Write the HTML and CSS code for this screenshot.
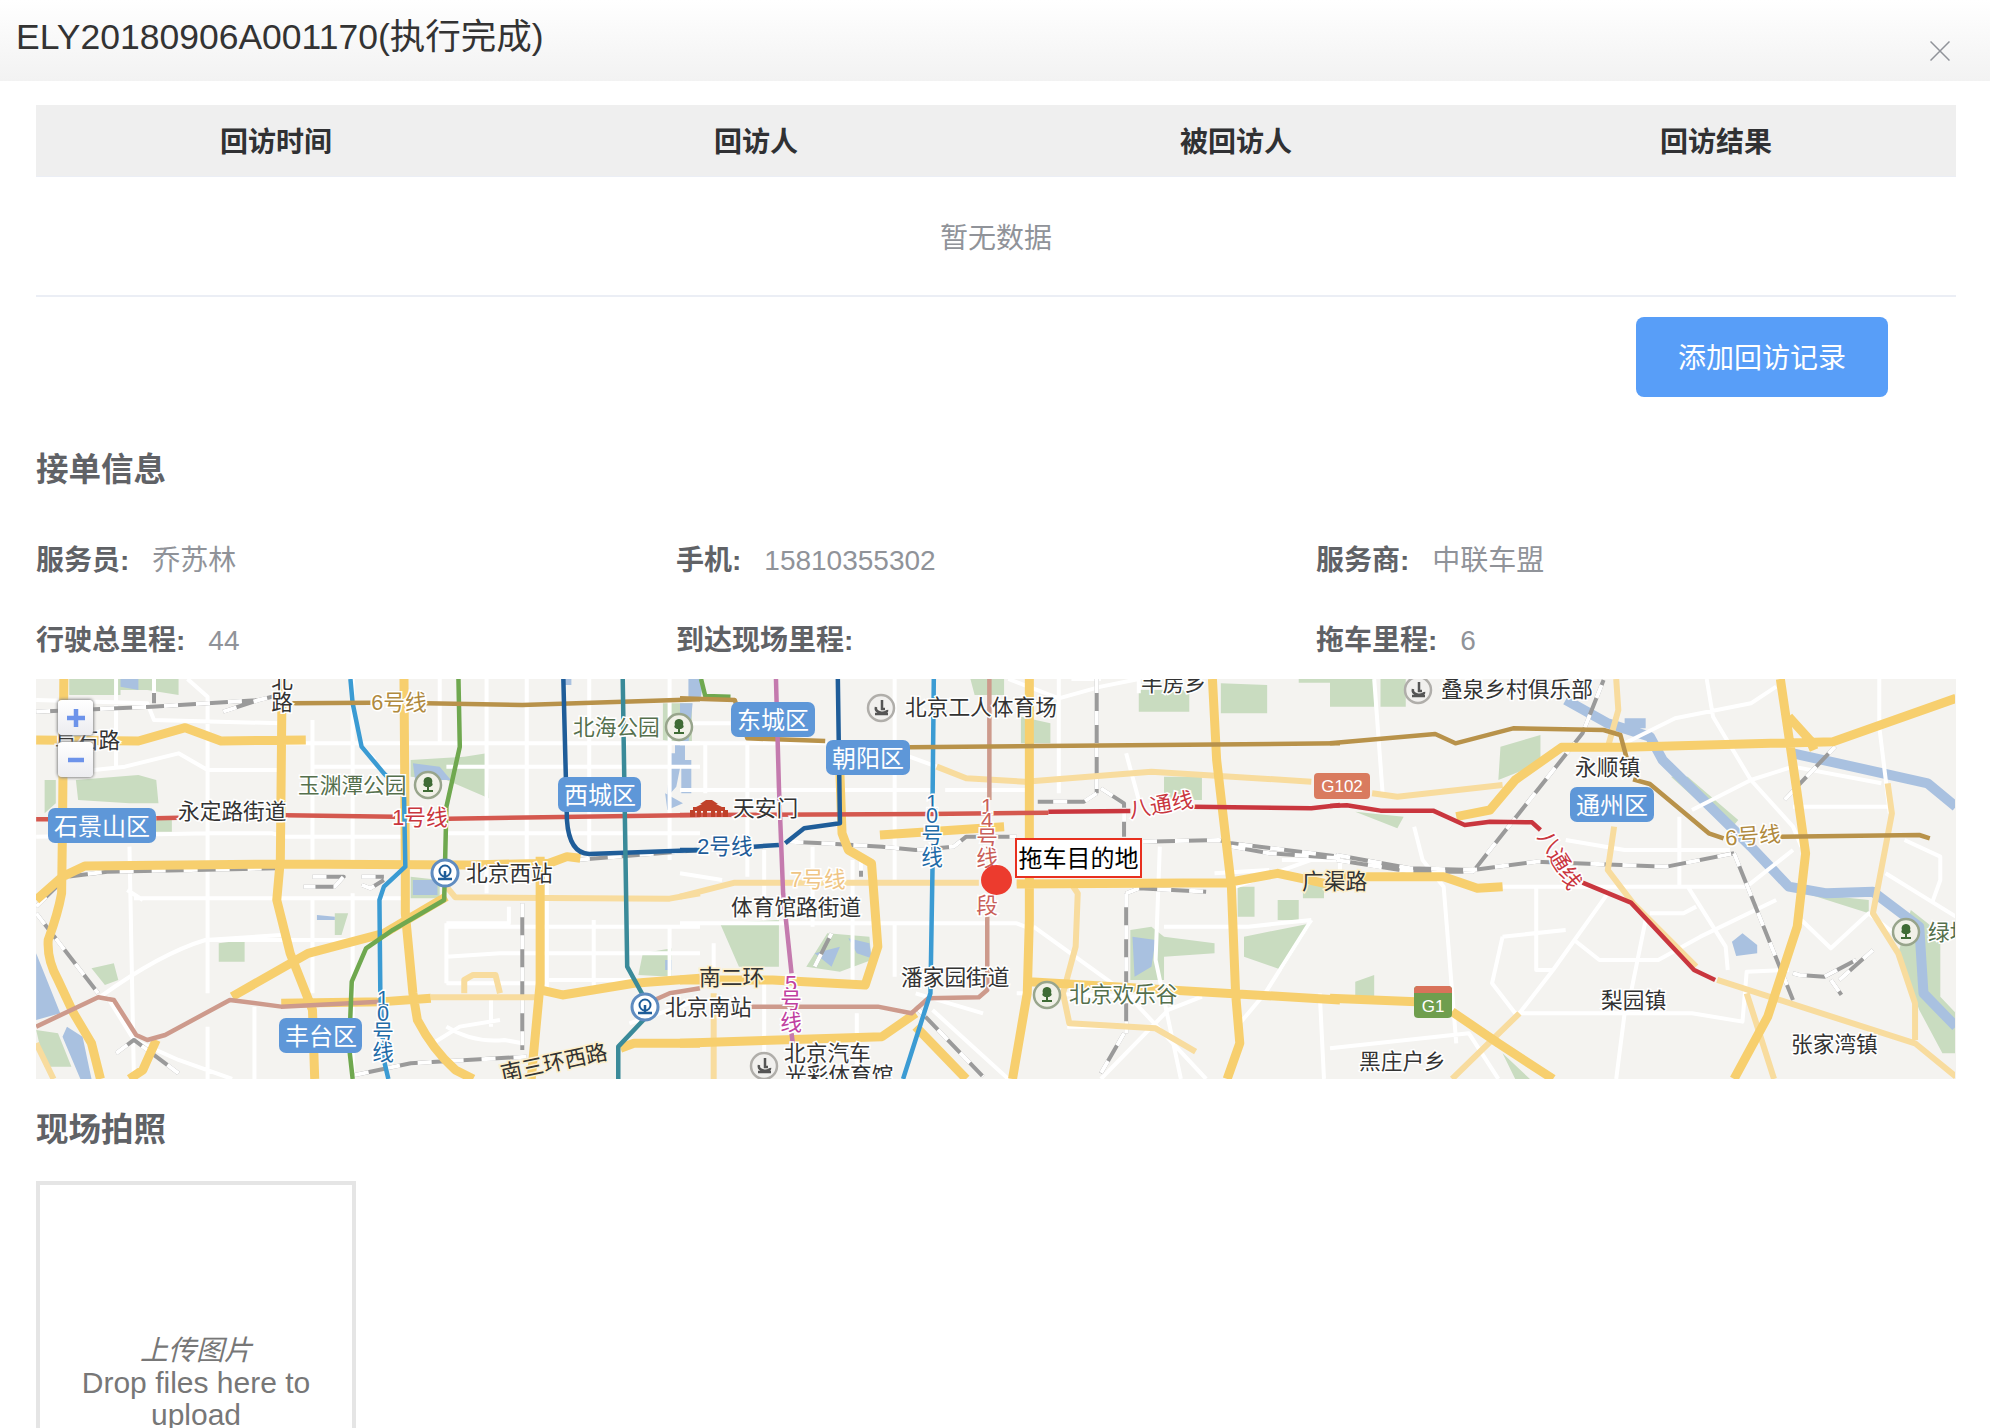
FILE: index.html
```html
<!DOCTYPE html>
<html>
	<head>
		<meta charset="UTF-8">
		<title>ELY20180906A001170</title>
		<link rel="stylesheet" href="styles.css">
	</head>
	<body>
		<div class="head">
			<h2>ELY20180906A001170(执行完成)</h2>
			<svg class="close" width="20" height="20" viewBox="0 0 20 20"><path d="M0.5 0.5L19.5 19.5M19.5 0.5L0.5 19.5"/></svg>
		</div>
		<div class="content">
			<table class="visit">
				<thead>
					<tr><th>回访时间</th><th>回访人</th><th>被回访人</th><th>回访结果</th></tr>
				</thead>
				<tbody>
					<tr><td colspan="4">暂无数据</td></tr>
				</tbody>
			</table>
			<div class="btn-row"><a class="btn" href="#">添加回访记录</a></div>

			<h3>接单信息</h3>
			<div class="info">
				<div><b>服务员:</b><span>乔苏林</span></div>
				<div><b>手机:</b><span>15810355302</span></div>
				<div><b>服务商:</b><span>中联车盟</span></div>
				<div><b>行驶总里程:</b><span>44</span></div>
				<div><b>到达现场里程:</b></div>
				<div><b>拖车里程:</b><span>6</span></div>
			</div>

			<div class="map">
				<svg class="tiles" width="1919" height="400" viewBox="36 679 1919 400">
					<defs>
						<g id="i-park">
							<circle r="13" fill="#f1f1e8" stroke="#98a58c" stroke-width="2.500"/>
							<path fill="#3f6b35" d="M0-8C4-8 5-4 4-2C6 0 3 2 1 2V5H5V7H-5V5H-1V2C-3 2-6 0-4-2C-5-4-4-8 0-8Z"/>
						</g>
						<g id="i-rail">
							<circle r="13" fill="#fff" stroke="#5f8cc0" stroke-width="3"/>
							<circle cy="-2" r="5.500" fill="none" stroke="#1f5d99" stroke-width="2"/>
							<path fill="none" stroke="#1f5d99" stroke-width="2.500" d="M0-2V5M-7 6H7"/>
						</g>
						<g id="i-sport">
							<circle r="13" fill="#f1f0ee" stroke="#b0aeaa" stroke-width="2.500"/>
							<path fill="none" stroke="#555" stroke-width="2.500" d="M1-8V1H4M-5-1C-7 6 7 6 6 2M-6 6H7"/>
						</g>
						<g id="rails">
							<g class="c3"><path d="M81 155L340 140L580 120M500 155L580 120L640 100M345 57V130M81 760L220 1000M81 740L150 650L240 635L620 625M700 650H770L750 680H680M810 650H860M810 675L830 685L860 660M1170 730V1170M795 1245L920 1210L1180 1190M260 1180L300 1140L400 1240M1290 600L1568 570"/></g>
							<g class="c4"><path d="M260 545L340 550L480 560L560 570L650 560L680 530H800M990 57V400M990 400L960 425H850M1000 385L1055 430V530M1100 545L1280 540L1310 550L1568 590M1310 560L1400 580L1568 595M1060 700L1090 685L1250 695M1060 700V1120M1055 1120L1000 1240M430 590V650M320 920L360 820M560 1040L720 1250"/></g>
							<g class="c5"><path d="M15 585L190 625L340 630L490 605L800 620L960 580M15 600L190 635L340 635L380 570L600 220L650 60M960 580L1100 1020M1080 420L1200 260M1100 940L1115 945L1175 950L1250 900M1210 960L1290 870M1190 960L1215 1005"/></g>
						</g>
					</defs>

					<g class="parks">
						<g class="c3"><path d="M155 57H400V105L330 90H270V105H155ZM170 360L310 345L350 360L355 430H290L175 420ZM100 360H125V430L100 460ZM490 850L548 840V905H490ZM920 300L1040 290L1090 280L1095 415L1000 360L920 350ZM1440 880L1505 865V950L1430 945ZM1485 130H1550V250L1485 240ZM920 650L985 660V715H920ZM205 925L255 910L265 960L235 975ZM750 760H780L765 825H750ZM81 1110L130 1120L160 1220H100ZM330 480H385V515H350Z"/></g>
						<g class="c4"><path d="M1090 90H1210V155H1090ZM1285 70L1395 75V160H1285ZM810 170L880 190V250H810ZM690 57H770V105H700ZM95 790L235 780V920H140ZM1070 810L1120 800L1150 830L1270 850V880L1150 890V960H1070ZM1340 830L1500 790L1430 930L1340 890ZM1150 350H1240V420H1150ZM1420 720H1470V780H1420ZM1325 680H1365V770H1325ZM1480 680L1530 660V715H1480ZM300 920L350 820L450 830L455 900L380 935ZM1470 57H1568V68H1470Z"/></g>
						<g class="c5"><path d="M0 57H105V140H0ZM120 57H180V140H120ZM405 260L500 225V310L400 360ZM810 350L850 350L970 480L950 510ZM1380 750L1450 820V1010L1487 1060V1180H1455L1400 1050L1350 880ZM60 965L105 945V1010H60ZM1130 700L1280 720V760ZM410 1180L475 1257H440ZM60 455L175 470L160 505Z"/></g>
					</g>

					<g class="water">
						<g class="c3"><path d="M81 880L135 1060L81 1080ZM150 1100L185 1130L205 1257H180L140 1130ZM925 310L985 320L1010 360L930 360ZM925 660H980V705H925ZM710 765L750 770V780H710ZM1500 280H1530L1515 380L1495 410ZM1490 400L1530 430L1495 450ZM1260 57H1280V75H1260ZM1490 900H1505V930H1490ZM270 57H310V90L270 80Z"/></g>
						<g class="c4"><path d="M0 130H30L20 250H0ZM20 57H55L50 110L20 115ZM1075 830L1130 840L1120 920L1080 950ZM320 880L380 860L360 920ZM400 835L450 850L455 895L420 880Z"/></g>
						<g class="c5"><path d="M955 845L980 820L1015 855L1015 880L965 888Z"/></g>
					</g>
					<g class="river">
						<g class="c4"><path d="M0 250V320M15 300V400"/></g>
						<g class="c5"><path d="M560 120L660 190L760 230L790 300L1000 560L1090 680L1180 700L1290 695L1400 800L1410 1000L1487 1100M1100 280L1420 370L1487 440M700 190H750"/></g>
					</g>

					<g class="minor">
						<g class="c3"><path d="M420 57L465 110V1000M260 57V320M81 120L330 130L345 180L630 190M210 330L280 320L400 280L465 330H632M632 250H1568M700 180V600M790 57V600M790 700V1257M1090 57V700M985 57V250M1180 57V600M1320 57V600M1500 57V600M700 320H905M1000 320H1568M81 530L465 520H610L640 530H905M1000 520H1568M300 715H900M1000 800H1568M225 1010Q360 880 460 840L630 825M465 840H800M1000 890L1120 880H1568M1000 790H1140V740M1225 610V1000M1330 780V1000M1500 800V950M700 720V1000M285 690L320 720M290 560L300 1257M1000 1100Q1060 1150 1130 1140L1170 1150M970 1150L1030 1100L1120 1080M465 1100V1257M570 1040V1257M810 260L840 300M240 1010L300 1140L400 1200L520 1257M1000 970H1200M1410 1090L1568 1020M1230 960H1568M1100 1020V1100M1000 790V970"/></g>
						<g class="c4"><path d="M0 190H120M60 250V400M160 250V650M315 560V800M510 57V660M900 57V400M930 57L1000 57M630 390H820M0 390H600M0 250H350M545 290L610 320M1140 560L1130 900L1190 1257M840 800L1060 1000L1250 1257M0 790H800L840 810M1150 800H1350L1500 780M1500 780L1390 1000L1330 1090M920 1100H1130M1320 680L1500 600H1568M1060 280L1090 420M510 790V950M410 600V960M200 570V780M80 850V950M200 960V1257M600 1050L780 1257M1430 600H1568V640M1090 57V100M780 57L900 115L1000 80L1090 57M420 1060V1257M0 640L100 660M560 1000L720 1060M800 1000H820M1520 1000L1530 1257M1270 640L1400 630M1240 1010L1160 1050L1000 1257M840 1000L1100 1010"/></g>
						<g class="c5"><path d="M105 57L125 400M895 57L910 170L1000 360L1100 500L1120 560M1305 57V200L1330 460M1060 80L1000 130L820 175L700 250M200 500L220 600L270 680L300 1150M410 680H840L990 680L1100 570M490 680V930H530M850 680L940 860L945 930M580 840L640 900H780L880 830L1060 720M410 830L560 810M410 830L385 970L440 1060H860L980 1085L990 935L1090 930M660 700L530 930L450 1060M760 760H840L870 740M700 1060L680 1257M750 780L705 1060M860 450L1000 360L1100 320L1310 370M830 470V680M1100 440H1330M560 540L700 570H950M0 1165L330 1120L400 1257M1320 640L1487 770M1120 780L1190 865L1280 760L1350 830M1365 540L1450 590V660L1430 730"/></g>
					</g>

					<use href="#rails" class="rail"/>
					<use href="#rails" class="rail-dash"/>

					<g class="road-l">
						<g class="c3"><path d="M1000 680L1020 712L1500 716L1568 700M965 1012H1200M1040 1000V960L1060 945H1110L1120 1000M81 1150L120 1257"/></g>
						<g class="c4"><path d="M0 710L130 668H710M800 668L930 672L945 700L940 860L910 1000L925 1090L1130 1105L1225 1175M610 320L680 355L820 365L1120 335L1500 365M80 1000V1257"/></g>
						<g class="c5"><path d="M100 400L160 410L410 375M680 57L685 150L660 262M675 500L660 630L720 730L870 920M1325 370L1335 460L1290 760L1350 880L1390 1030L1390 1140M990 1000L1055 1257M450 1060L290 1257M920 960L1390 1150L1487 1250"/></g>
					</g>
					<g class="road">
						<g class="c3"><path d="M143 57L140 500L138 700Q130 760 108 840Q105 900 130 960L165 1060L205 1150L225 1257M81 240L310 243L415 203L495 243L685 240M632 57L628 600L620 720L650 880L700 1050L705 1257M905 57L908 600L908 760L925 1000L935 1080Q970 1170 1020 1230L1060 1257M81 720L140 650L190 618L620 612L1050 615L1230 610L1270 590L1300 595M1210 590V970L1190 1257M520 1010L690 880L860 820L1000 710M630 1030L860 1025L965 1015M1210 990L1260 1005L1420 970L1568 955M1390 1165L1420 1150H1568M350 1140L320 1230L290 1257"/></g>
						<g class="c4"><path d="M830 57V780L825 1000L790 1257M1265 57L1275 300L1310 680L1320 1000L1330 1150L1300 1257M380 340L385 520L400 570L455 610L470 860L440 975L220 960L0 960M475 525L770 500M800 672L1300 668L1420 640L1568 680M830 965L1568 1020M0 1150L480 1130L560 1060M560 1100L680 1257"/></g>
						<g class="c5"><path d="M1070 57L1110 400L1130 580L1110 800L1040 1070L960 1257M300 470L380 450L440 360L550 262L700 262L1195 245L1487 115M0 650L270 650L350 685L410 680M0 1015L205 1025M290 1055L400 1150L530 1257M1090 170L1140 240L1150 270"/></g>
					</g>

					<g class="lines">
						<g class="c3">
							<path class="l-pink" d="M81 1100L220 1012L255 1020L305 1125L330 1140L370 1125L515 1020L630 1040L850 1025M1450 1030L1500 1000L1568 985"/>
							<path class="l-blue" d="M785 57L790 130L810 260L860 340L905 400L908 620L860 680L850 720L852 1000L860 1200L870 1257"/>
							<path class="l-green" d="M1027 57L1030 260L1000 440L995 720L880 810L820 865L788 965L782 1160L790 1257"/>
							<path class="l-tan" d="M655 130L830 128M955 130L1170 135L1568 118"/>
							<path class="l-red1" d="M81 478H110M350 475L400 473M640 466L885 470M1005 476L1568 465"/>
							<path class="l-navy" d="M1262 57L1270 480Q1275 580 1320 582L1568 570"/>
							<path class="l-teal" d="M1395 57L1405 920L1440 1005M1445 1075L1385 1160V1257"/>
						</g>
						<g class="c4">
							<path class="l-pink" d="M735 57V420M730 770V990L710 1012L590 1015L550 1060L470 1040L170 1040"/>
							<path class="l-blue" d="M603 57L600 430M600 620L595 1000L530 1257"/>
							<path class="l-green" d="M50 57L60 108L120 110"/>
							<path class="l-tan" d="M0 115L130 120L160 235L345 243M545 262L1568 250"/>
							<path class="l-red1" d="M0 465L590 462L875 458"/>
							<path class="l-red2" d="M875 455L1070 453M1220 440L1500 445L1568 435"/>
							<path class="l-navy" d="M375 57L380 490L295 505L250 550M0 570H40M175 560L235 555"/>
							<path class="l-purple" d="M228 57L235 380L245 700L265 940M265 1120L268 1150"/>
						</g>
						<g class="c5">
							<path class="l-red2" d="M0 438L40 436L120 452H245L320 495L380 485L480 487L500 510M600 668L715 728L865 930L915 960"/>
							<path class="l-tan" d="M0 250L250 222L298 250L435 205L650 210L690 225L705 295M720 358L760 372L900 520L935 535M1070 530L1400 525L1425 535"/>
						</g>
					</g>

					<g class="shields">
						<rect class="s-g102" x="1314" y="773" width="56" height="26" rx="4"/>
						<text class="s-txt" x="1342" y="786">G102</text>
						<rect class="s-g1" x="1414" y="986" width="38" height="32" rx="4"/>
						<path class="s-top" d="M1414 993V990Q1414 986 1418 986H1448Q1452 986 1452 990V993Z"/>
						<text class="s-txt" x="1433" y="1006">G1</text>
					</g>

					<g class="labels">
						<text x="282" y="680" class="mid">北</text>
						<text x="282" y="702" class="mid">路</text>
						<text x="55" y="740">阜石路</text>
						<text x="178" y="811">永定路街道</text>
						<text x="466" y="873">北京西站</text>
						<text x="665" y="1007">北京南站</text>
						<text x="905" y="707">北京工人体育场</text>
						<text x="1141" y="683">半房乡</text>
						<text x="733" y="808">天安门</text>
						<text x="731" y="907">体育馆路街道</text>
						<text x="901" y="977">潘家园街道</text>
						<text x="784" y="1053">北京汽车</text>
						<text x="785" y="1075">光彩体育馆</text>
						<text x="1441" y="689">叠泉乡村俱乐部</text>
						<text x="1575" y="767">永顺镇</text>
						<text x="1601" y="1000">梨园镇</text>
						<text x="1359" y="1061">黑庄户乡</text>
						<text x="1791" y="1044">张家湾镇</text>
						<text x="1302" y="881" class="cream">广渠路</text>
						<text x="699" y="977" class="cream">南二环</text>
						<text x="554" y="1063" class="cream mid" transform="rotate(-12 554 1063)">南三环西路</text>
						<text x="298" y="785" class="park">玉渊潭公园</text>
						<text x="573" y="727" class="park">北海公园</text>
						<text x="1069" y="994" class="park">北京欢乐谷</text>
						<text x="1928" y="932" class="park">绿地公园</text>
						<text x="399" y="702" class="tan mid">6号线</text>
						<text x="1753" y="836" class="tan mid" transform="rotate(-4 1753 836)">6号线</text>
						<text x="420" y="817" class="red mid">1号线</text>
						<text x="1161" y="805" class="red mid" transform="rotate(-10 1161 805)">八通线</text>
						<text class="red mid" transform="translate(1549 842) rotate(58)">八</text>
						<text class="red mid" transform="translate(1559 860) rotate(58)">通</text>
						<text class="red mid" transform="translate(1570 878) rotate(58)">线</text>
						<text x="725" y="846" class="navy mid">2号线</text>
						<text x="818" y="879" class="orange mid">7号线</text>
						<text class="sky mid"><tspan x="383" y="998">1</tspan><tspan x="383" y="1013">0</tspan><tspan x="383" y="1032">号</tspan><tspan x="383" y="1052">线</tspan></text>
						<text class="sky mid"><tspan x="932" y="802">1</tspan><tspan x="932" y="815">0</tspan><tspan x="932" y="835">号</tspan><tspan x="932" y="857">线</tspan></text>
						<text class="rose mid"><tspan x="987" y="806">1</tspan><tspan x="987" y="820">4</tspan><tspan x="987" y="838">号</tspan><tspan x="987" y="858">线</tspan><tspan x="987" y="905">段</tspan></text>
						<text class="violet mid"><tspan x="791" y="983">5</tspan><tspan x="791" y="1000">号</tspan><tspan x="791" y="1022">线</tspan></text>
					</g>

					<use href="#i-park" x="428" y="785"/>
					<use href="#i-park" x="679" y="727"/>
					<use href="#i-park" x="1047" y="995"/>
					<use href="#i-park" x="1906" y="932"/>
					<use href="#i-rail" x="445" y="873"/>
					<use href="#i-rail" x="645" y="1007"/>
					<use href="#i-sport" x="881" y="708"/>
					<use href="#i-sport" x="764" y="1066"/>
					<use href="#i-sport" x="1418" y="690"/>
					<path class="gate" d="M690 817V810H693V807H696L702 804H700L706 800H712L718 804H716L722 807H725V810H728V817H723V811H721V817H717V811H715V817H711V811H707V817H703V811H701V817H697V811H695V817Z"/>

					<g class="districts">
						<rect x="48" y="808" width="108" height="35" rx="7"/><text x="102" y="826">石景山区</text>
						<rect x="558" y="777" width="83" height="35" rx="7"/><text x="600" y="795">西城区</text>
						<rect x="279" y="1018" width="83" height="35" rx="7"/><text x="321" y="1036">丰台区</text>
						<rect x="731" y="702" width="84" height="35" rx="7"/><text x="773" y="720">东城区</text>
						<rect x="826" y="740" width="84" height="35" rx="7"/><text x="868" y="758">朝阳区</text>
						<rect x="1570" y="787" width="84" height="35" rx="7"/><text x="1612" y="805">通州区</text>
					</g>
				</svg>

				<div class="zoom-ctl zoom-in"><svg width="22" height="22" viewBox="0 0 22 22"><path d="M11 2V20M2 11H20"/></svg></div>
				<div class="zoom-ctl zoom-out"><svg width="22" height="22" viewBox="0 0 22 22"><path d="M3 11H19"/></svg></div>
				<div class="dot"></div>
				<div class="dest">拖车目的地</div>
			</div>

			<h3 class="photo-title">现场拍照</h3>
			<div class="upload">
				<em>上传图片</em>
				<p>Drop files here to upload</p>
			</div>
		</div>
	</body>
</html>
```

FILE: styles.css
```css
html,body{
	margin: 0;
	height: 1428px;
	overflow: hidden;
	background: #fff;
}
body{
	font-family: "Liberation Sans","Noto Sans CJK SC",sans-serif;
	color: #333;
}
.head{
	display: flex;
	justify-content: space-between;
	height: 81px;
	padding-left: 16px;
	background: linear-gradient(#fff,#f2f2f2);
}
.head h2{
	margin: 0;
	font-size: 35.500px;
	font-weight: normal;
	line-height: 74px;
	color: #333;
}
.close{
	margin: 41px 40px 0 0;
}
.close path{
	fill: none;
	stroke: #909399;
	stroke-width: 1.500;
}
.content{
	padding: 24px 34px 0 36px;
}

/* 回访记录 */
.visit{
	width: 100%;
	table-layout: fixed;
	border-spacing: 0;
}
.visit th{
	height: 72px;
	padding: 0 0 2px;
	box-sizing: border-box;
	background: #efefef;
	border-bottom: 1px solid #ebeef5;
	font-size: 28px;
	font-weight: bold;
	color: #303133;
}
.visit td{
	height: 120px;
	padding: 0;
	box-sizing: border-box;
	border-bottom: 2px solid #ebeef5;
	text-align: center;
	font-size: 28px;
	color: #909399;
}
.btn-row{
	display: flex;
	justify-content: flex-end;
	margin-top: 20px;
	padding-right: 68px;
}
.btn{
	width: 252px;
	height: 80px;
	border-radius: 8px;
	background: #589ef8;
	color: #fff;
	font-size: 28px;
	line-height: 84px;
	text-align: center;
	text-decoration: none;
}

h3{
	margin: 52px 0 28px;
	font-size: 32.500px;
	font-weight: bold;
	line-height: 42px;
	color: #606266;
}
.info{
	display: grid;
	grid-template-columns: repeat(3,1fr);
	grid-auto-rows: 80px;
	font-size: 28px;
	line-height: 84px;
}
.info b{
	margin-right: 23px;
	color: #606266;
}
.info span{
	color: #909399;
}

/* 地图 */
.map{
	position: relative;
	height: 400px;
	overflow: hidden;
	background: #f4f3f0;
}
.tiles{
	display: block;
}
.c3{transform: translate(0,660px) scale(.4464,.3333);}
.c4{transform: translate(680px,660px) scale(.4209,.3333);}
.c5{transform: translate(1330px,660px) scale(.4209,.3333);}
.parks path{fill: #c9dcc0;}
.water path{fill: #a9c1e0;}
.tiles path{vector-effect: non-scaling-stroke;}
.river,.minor,.rail,.rail-dash,.road,.road-l,.lines{
	fill: none;
	stroke-linejoin: round;
}
.river{stroke: #a9c1e0; stroke-width: 10;}
.minor{stroke: #fff; stroke-width: 4;}
.rail{stroke: #9a9a9a; stroke-width: 4;}
.rail-dash{stroke: #fff; stroke-width: 4; stroke-dasharray: 14 18;}
.road{stroke: #f7cf6e; stroke-width: 9;}
.road-l{stroke: #f8dc9e; stroke-width: 6;}
.lines path{stroke-width: 4.500;}
.l-pink{stroke: #cd9a8c;}
.l-blue{stroke: #3b9bd3;}
.l-green{stroke: #6fa84f;}
.l-tan{stroke: #b8924a;}
.l-red1{stroke: #d4584f;}
.l-red2{stroke: #c9363e;}
.l-navy{stroke: #1f5d99;}
.l-teal{stroke: #3a8a99;}
.l-purple{stroke: #c47aae;}
.labels text{
	font-size: 21.700px;
	fill: #333;
	stroke: #fff;
	stroke-width: 3px;
	paint-order: stroke;
	dominant-baseline: central;
}
.labels .mid{text-anchor: middle;}
.labels .cream{stroke: #fdf0cc;}
.labels .park{fill: #55704d;}
.labels .tan{fill: #b08a3e;}
.labels .red{fill: #c9363e;}
.labels .navy{fill: #1f5d99;}
.labels .orange{fill: #efc585;}
.labels .sky{fill: #1f6ca8;}
.labels .rose{fill: #c9605a;}
.labels .violet{fill: #c040a0;}
.districts rect{fill: #5e97d8;}
.districts text{
	font-size: 24px;
	fill: #fff;
	text-anchor: middle;
	dominant-baseline: central;
}
.s-g102{fill: #d97b5f;}
.s-g1{fill: #6f9e4e;}
.s-top{fill: #d9725a;}
.s-txt{
	font-size: 17px;
	fill: #fff;
	text-anchor: middle;
	dominant-baseline: central;
}
.gate{fill: #c0412a;}

.zoom-ctl{
	position: absolute;
	left: 22px;
	width: 35px;
	height: 35px;
	box-sizing: border-box;
	display: flex;
	align-items: center;
	justify-content: center;
	border-radius: 4px;
	background: linear-gradient(#fff,#ececf0);
	box-shadow: 0 0 3px 1px #8a8a8a;
}
.zoom-in{top: 21px;}
.zoom-out{top: 63px;}
.zoom-ctl path{
	fill: none;
	stroke: #6d93ea;
	stroke-width: 4.500;
}
.dot{
	position: absolute;
	left: 945px;
	top: 186px;
	width: 31px;
	height: 30px;
	border-radius: 50%;
	background: #ec3b2e;
}
.dest{
	position: absolute;
	left: 979px;
	top: 159px;
	width: 127px;
	height: 40px;
	box-sizing: border-box;
	border: 2px solid #e8301f;
	background: #fff;
	color: #000;
	font-size: 24px;
	line-height: 37px;
	text-align: center;
}

.photo-title{
	margin: 30px 0 30px;
}
.upload{
	width: 320px;
	height: 320px;
	box-sizing: border-box;
	border: 4px solid #e5e5e5;
	padding-top: 150px;
	text-align: center;
	font-size: 30px;
	line-height: 32px;
	color: #777;
}
.upload em{
	display: block;
	font-size: 28px;
}
.upload p{
	margin: 0;
	padding: 0 20px;
}
```
